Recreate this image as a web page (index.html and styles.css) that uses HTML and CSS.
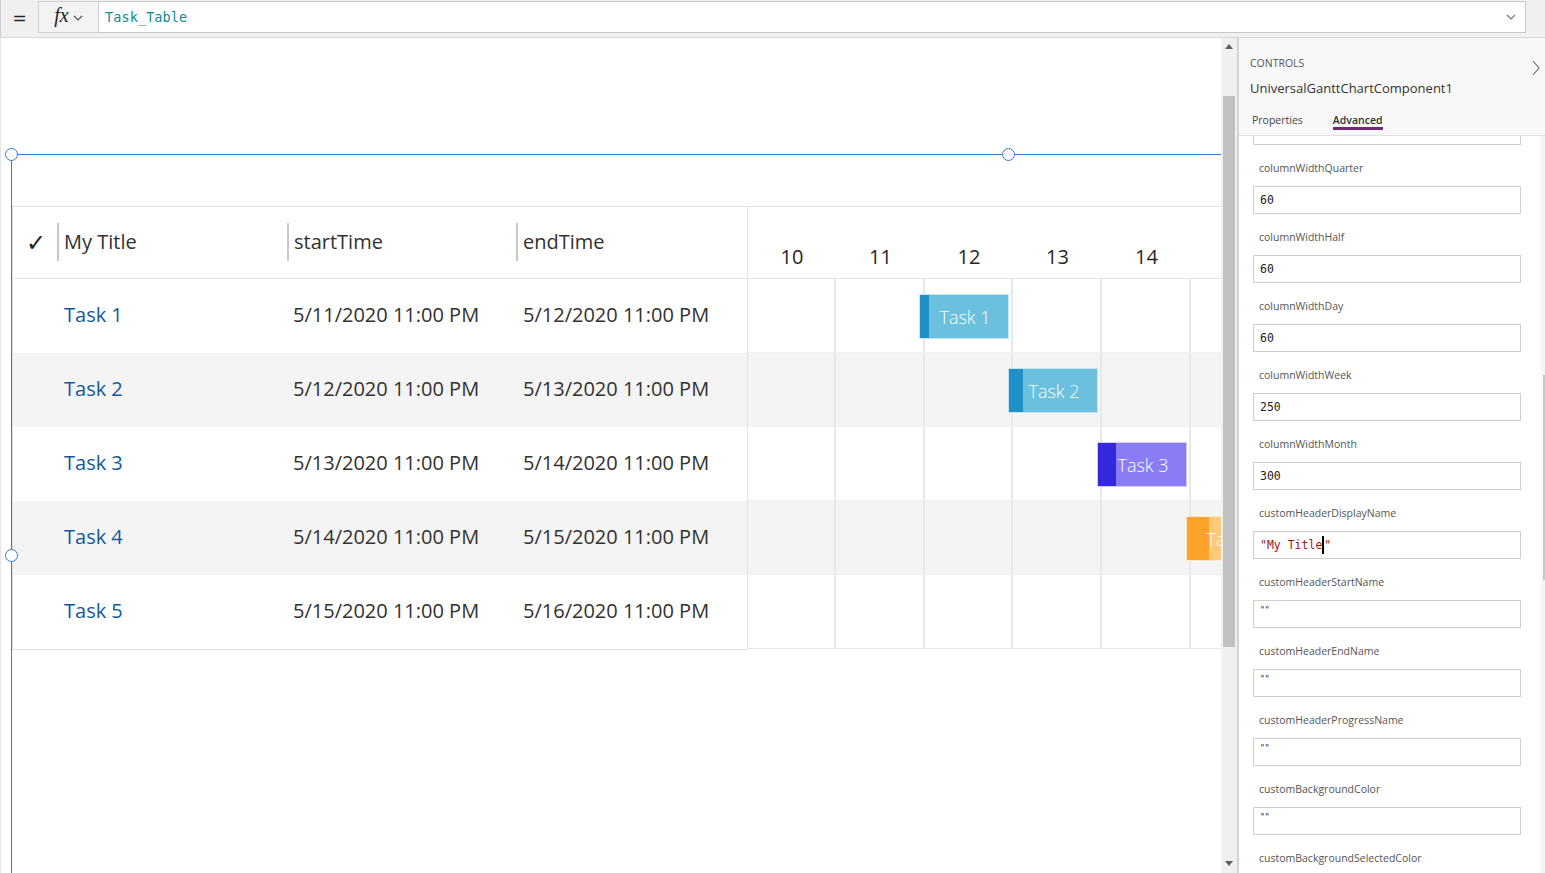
FILE: index.html
```html
<!DOCTYPE html>
<html>
<head>
<meta charset="utf-8">
<link rel="stylesheet" href="styles.css">
</head>
<body>
<div class="topbar">
  <div class="eq">=</div>
  <div class="fxbtn"><span class="fx">fx</span><svg class="chev" width="10" height="6" viewBox="0 0 10 6"><path d="M1 1l4 4 4-4" fill="none" stroke="#555" stroke-width="1.2"/></svg></div>
  <div class="formula"><span class="ftext">Task_Table</span><svg class="fchev" width="10" height="6" viewBox="0 0 10 6"><path d="M1 1l4 4 4-4" fill="none" stroke="#777" stroke-width="1.2"/></svg></div>
</div>
<div class="main">
  <div class="canvas">
    <div class="gantt">
      <div class="left">
        <div class="thead">
          <div class="c-check"><span class="check">✓</span></div>
          <div class="c-col"><span class="sep"></span>My Title</div>
          <div class="c-col c2"><span class="sep"></span>startTime</div>
          <div class="c-col last"><span class="sep"></span>endTime</div>
        </div>
        <div class="row"><div class="c-check"></div><div class="c-cell name">Task 1</div><div class="c-cell c2">5/11/2020 11:00 PM</div><div class="c-cell last">5/12/2020 11:00 PM</div></div>
        <div class="row alt"><div class="c-check"></div><div class="c-cell name">Task 2</div><div class="c-cell c2">5/12/2020 11:00 PM</div><div class="c-cell last">5/13/2020 11:00 PM</div></div>
        <div class="row"><div class="c-check"></div><div class="c-cell name">Task 3</div><div class="c-cell c2">5/13/2020 11:00 PM</div><div class="c-cell last">5/14/2020 11:00 PM</div></div>
        <div class="row alt"><div class="c-check"></div><div class="c-cell name">Task 4</div><div class="c-cell c2">5/14/2020 11:00 PM</div><div class="c-cell last">5/15/2020 11:00 PM</div></div>
        <div class="row"><div class="c-check"></div><div class="c-cell name">Task 5</div><div class="c-cell c2">5/15/2020 11:00 PM</div><div class="c-cell last">5/16/2020 11:00 PM</div></div>
      </div>
      <div class="right">
        <div class="ghead">
          <div class="gh w88">10</div><div class="gh w89">11</div><div class="gh w88">12</div><div class="gh w89">13</div><div class="gh w89">14</div>
        </div>
        <div class="grow">
          <div class="gc w88"></div><div class="gc w89"></div><div class="gc w88"></div><div class="gc w89"></div><div class="gc w89"></div><div class="gc rest"></div>
          <div class="bar blue" style="left:171px"><div class="prog" style="width:9px"></div><span>Task 1</span></div>
        </div>
        <div class="grow alt">
          <div class="gc w88"></div><div class="gc w89"></div><div class="gc w88"></div><div class="gc w89"></div><div class="gc w89"></div><div class="gc rest"></div>
          <div class="bar blue" style="left:260px"><div class="prog" style="width:14px"></div><span>Task 2</span></div>
        </div>
        <div class="grow">
          <div class="gc w88"></div><div class="gc w89"></div><div class="gc w88"></div><div class="gc w89"></div><div class="gc w89"></div><div class="gc rest"></div>
          <div class="bar purple" style="left:349px"><div class="prog" style="width:18px"></div><span>Task 3</span></div>
        </div>
        <div class="grow alt">
          <div class="gc w88"></div><div class="gc w89"></div><div class="gc w88"></div><div class="gc w89"></div><div class="gc w89"></div><div class="gc rest"></div>
          <div class="bar orange" style="left:438px"><div class="prog" style="width:22px"></div><span>Task 4</span></div>
        </div>
        <div class="grow">
          <div class="gc w88"></div><div class="gc w89"></div><div class="gc w88"></div><div class="gc w89"></div><div class="gc w89"></div><div class="gc rest"></div>
        </div>
      </div>
    </div>
    <div class="sel-h"></div>
    <div class="sel-v"></div>
    <div class="handle h1"></div>
    <div class="handle h2"></div>
    <div class="handle h3"></div>
  </div>
  <div class="vscroll">
    <svg class="arr" width="8" height="5" viewBox="0 0 8 5"><path d="M0 5L4 0 8 5z" fill="#5f5f5f"/></svg>
    <div class="thumb"></div>
    <svg class="arr down" width="8" height="5" viewBox="0 0 8 5"><path d="M0 0L4 5 8 0z" fill="#5f5f5f"/></svg>
  </div>
  <div class="panel">
    <div class="phead">
      <div class="ptitle-row">
        <div>
          <div class="controls">CONTROLS</div>
          <div class="compname">UniversalGanttChartComponent1</div>
        </div>
        <svg class="pchev" width="8" height="16" viewBox="0 0 8 16"><path d="M1 1l6 7-6 7" fill="none" stroke="#666" stroke-width="1.1"/></svg>
      </div>
      <div class="tabs"><span class="tab">Properties</span><span class="tab active">Advanced</span></div>
    </div>
    <div class="pbody">
      <div class="fields">
        <div class="box partial"></div>
        <div class="label">columnWidthQuarter</div><div class="box">60</div>
        <div class="label">columnWidthHalf</div><div class="box">60</div>
        <div class="label">columnWidthDay</div><div class="box">60</div>
        <div class="label">columnWidthWeek</div><div class="box">250</div>
        <div class="label">columnWidthMonth</div><div class="box">300</div>
        <div class="label">customHeaderDisplayName</div><div class="box"><span class="str">"My Title</span><span class="caret"></span><span class="str">"</span></div>
        <div class="label">customHeaderStartName</div><div class="box q">""</div>
        <div class="label">customHeaderEndName</div><div class="box q">""</div>
        <div class="label">customHeaderProgressName</div><div class="box q">""</div>
        <div class="label">customBackgroundColor</div><div class="box q">""</div>
        <div class="label">customBackgroundSelectedColor</div>
      </div>
      <div class="pscroll"><div class="pthumb"></div></div>
    </div>
  </div>
</div>
</body>
</html>
```
FILE: styles.css
```css
* { box-sizing: border-box; }
html, body { margin: 0; padding: 0; }
body {
  width: 1545px;
  height: 873px;
  overflow: hidden;
  font-family: "Open Sans", "Noto Sans", sans-serif;
  color: #323130;
  background: #fff;
}
.topbar {
  height: 38px;
  display: flex;
  align-items: flex-start;
  background: #f0f0f0;
  border-bottom: 1px solid #d6d6d6;
  border-left: 1px solid #d0d0d0;
}
.eq {
  width: 37px;
  height: 36px;
  line-height: 36px;
  text-align: center;
  font-family: "DejaVu Sans", sans-serif;
  font-size: 17px;
  color: #222;
}
.fxbtn {
  width: 61px;
  height: 32px;
  margin-top: 1px;
  border: 1px solid #d0d0d0;
  background: #f3f3f3;
  display: flex;
  align-items: center;
  justify-content: center;
  gap: 4px;
}
.fx {
  font-family: "Liberation Serif", serif;
  font-style: italic;
  font-size: 20px;
  color: #222;
  margin-top: -4px;
}
.chev { margin-top: 1px; }
.formula {
  flex: 1;
  height: 32px;
  margin-top: 1px;
  margin-right: 19px;
  border: 1px solid #c8c8c8;
  border-left: none;
  background: #fff;
  display: flex;
  align-items: center;
  justify-content: space-between;
  padding: 0 9px 0 6px;
}
.ftext {
  font-family: "DejaVu Sans Mono", monospace;
  font-size: 13.5px;
  color: #128a8e;
  letter-spacing: 0.1px;
}
.main {
  display: flex;
  height: 835px;
}
.canvas {
  width: 1221px;
  height: 835px;
  position: relative;
  overflow: hidden;
  border-left: 1px solid #e6e6e6;
  padding-top: 168px;
}
.gantt {
  display: flex;
  margin-left: 11px;
  width: 1209px;
}
.left {
  width: 736px;
  border-left: 1px solid #e3e3e3;
  border-bottom: 1px solid #e0e0e0;
  border-right: 1px solid #e3e3e3;
}
.thead {
  height: 73px;
  border-top: 1px solid #e3e3e3;
  border-bottom: 1px solid #e3e3e3;
  display: flex;
  align-items: center;
  font-size: 20px;
}
.c-check {
  width: 44px;
  flex: none;
  text-align: center;
  padding-left: 2px;
}
.check {
  font-family: "DejaVu Sans", sans-serif;
  font-size: 24px;
  font-weight: bold;
  color: #222;
}
.c-col {
  width: 230px;
  flex: none;
  display: flex;
  align-items: center;
  height: 38px;
  margin-top: -2px;
}
.c-col.c2, .c-cell.c2 { width: 229px; }
.c-col.last { width: auto; flex: 1; }
.sep {
  width: 2px;
  height: 38px;
  background: #c8c8c8;
  margin-right: 5px;
  flex: none;
}
.row {
  height: 74px;
  display: flex;
  align-items: center;
  font-size: 20px;
  padding-bottom: 3px;
}
.row.alt, .grow.alt { background: #f4f4f4; }
.c-cell {
  width: 230px;
  flex: none;
  padding-left: 6px;
  color: #323130;
}
.c-cell.name { padding-left: 7px; color: #14589a; }
.c-cell.last { width: auto; flex: 1; padding-left: 7px; }
.right {
  flex: 1;
  overflow: hidden;
}
.ghead {
  height: 73px;
  border-top: 1px solid #e3e3e3;
  border-bottom: 1px solid #e3e3e3;
  display: flex;
  font-size: 20px;
  color: #252525;
}
.gh {
  text-align: center;
  padding-top: 36px;
  flex: none;
}
.w88 { width: 88px; }
.w89 { width: 89px; }
.grow {
  height: 74px;
  display: flex;
  position: relative;
  border-bottom: 1px solid #eef0f2;
}
.grow:last-child { border-bottom: 1px solid #e8e8e8; }
.gc {
  flex: none;
  height: 100%;
  border-right: 2px solid #e8e8e8;
}
.gc.rest { flex: 1; border-right: none; }
.bar {
  position: absolute;
  top: 15px;
  width: 90px;
  height: 45px;
  border: 1px solid rgba(255,255,255,0.6);
  display: flex;
  align-items: center;
  justify-content: center;
  overflow: hidden;
}
.bar .prog {
  position: absolute;
  left: 0;
  top: 0;
  bottom: 0;
}
.bar span {
  position: relative;
  color: #fff;
  font-size: 18px;
  font-weight: 300;
  white-space: nowrap;
  padding-left: 2px;
}
.bar.blue { background: #6bc0de; }
.bar.blue .prog { background: #2190c6; }
.bar.purple { background: #8a7cf4; }
.bar.purple .prog { background: #3328de; }
.bar.orange { background: #fec97a; }
.bar.orange .prog { background: #fea32a; }
.sel-h {
  position: absolute;
  left: 11px;
  right: 0;
  top: 116px;
  height: 1px;
  background: #2d7fd2;
}
.sel-v {
  position: absolute;
  left: 10px;
  top: 116px;
  bottom: 0;
  width: 1px;
  background: #2d7fd2;
}
.handle {
  position: absolute;
  width: 13px;
  height: 13px;
  border-radius: 50%;
  background: #fff;
  border: 1.5px solid #2d7fd2;
}
.h1 { left: 4px; top: 110px; }
.h2 { left: 1001px; top: 110px; }
.h3 { left: 4px; top: 511px; }
.vscroll {
  width: 16px;
  background: #f0f0f0;
  position: relative;
  display: flex;
  flex-direction: column;
  align-items: center;
}
.arr { margin-top: 6px; flex: none; }
.thumb {
  width: 12px;
  height: 551px;
  margin-top: 47px;
  background: #c1c1c1;
}
.arr.down { margin-top: auto; margin-bottom: 7px; }
.panel {
  flex: 1;
  border-left: 2px solid #d4d4d4;
  display: flex;
  flex-direction: column;
  background: #fff;
}
.phead {
  height: 98px;
  background: #f8f8f8;
  border-bottom: 1px solid #e1e1e1;
  padding: 18px 0 0 11px;
  flex: none;
}
.ptitle-row {
  display: flex;
  justify-content: space-between;
  align-items: flex-start;
}
.pchev { margin-top: 4px; margin-right: 5px; }
.controls {
  font-size: 10.5px;
  color: #555;
  line-height: 14px;
}
.compname {
  font-size: 13px;
  color: #333;
  margin-top: 9px;
  line-height: 18px;
}
.tabs {
  margin-top: 17px;
  display: flex;
  gap: 30px;
  padding-left: 2px;
}
.tab {
  font-size: 10.5px;
  color: #444;
  line-height: 13px;
  padding-bottom: 0;
  border-bottom: 3px solid transparent;
}
.tab.active {
  font-weight: 600;
  color: #333;
  border-bottom-color: #742774;
}
.pbody {
  flex: 1;
  display: flex;
  overflow: hidden;
}
.fields {
  flex: 1;
  padding-left: 14px;
  padding-right: 20px;
}
.label {
  font-size: 10.5px;
  color: #555;
  line-height: 16px;
  padding: 15px 0 0 6px;
  height: 41px;
  white-space: nowrap;
}
.box {
  height: 28px;
  border: 1px solid #cfcfcf;
  font-family: "DejaVu Sans Mono", monospace;
  font-size: 11.5px;
  color: #222;
  line-height: 26px;
  padding-left: 6px;
  display: flex;
  align-items: center;
}
.box.partial {
  height: 9px;
  border-top: none;
}
.box.q { font-size: 8px; align-items: flex-start; line-height: 20px; }
.str { color: #a31515; white-space: pre; }
.caret {
  width: 2px;
  height: 18px;
  background: #000;
}
.pscroll {
  width: 4px;
  background: #f5f5f5;
  position: relative;
}
.pthumb {
  margin-top: 239px;
  height: 205px;
  background: #c8c8c8;
  width: 2px;
  margin-left: 2px;
}
```
